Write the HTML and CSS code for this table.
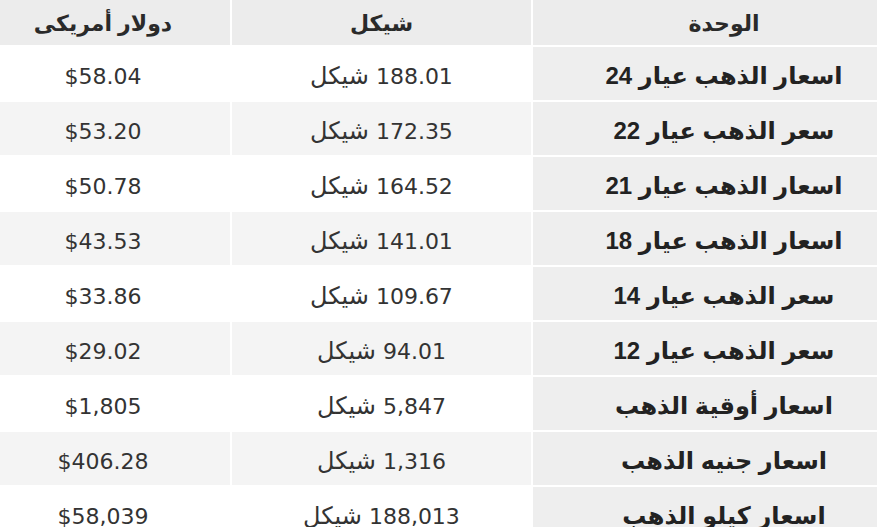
FILE: index.html
```html
<!DOCTYPE html>
<html lang="ar" dir="rtl">
<head>
<meta charset="utf-8">
<link rel="stylesheet" href="styles.css">
</head>
<body>
<table class="prices">
  <thead>
    <tr>
      <th class="c-label">الوحدة</th>
      <th class="c-ils">شيكل</th>
      <th class="c-usd">دولار أمريكى</th>
    </tr>
  </thead>
  <tbody>
    <tr><td class="label">اسعار الذهب عيار 24</td><td>188.01 <span class="unit">شيكل</span></td><td>$58.04</td></tr>
    <tr><td class="label">سعر الذهب عيار 22</td><td>172.35 <span class="unit">شيكل</span></td><td>$53.20</td></tr>
    <tr><td class="label">اسعار الذهب عيار 21</td><td>164.52 <span class="unit">شيكل</span></td><td>$50.78</td></tr>
    <tr><td class="label">اسعار الذهب عيار 18</td><td>141.01 <span class="unit">شيكل</span></td><td>$43.53</td></tr>
    <tr><td class="label">سعر الذهب عيار 14</td><td>109.67 <span class="unit">شيكل</span></td><td>$33.86</td></tr>
    <tr><td class="label">سعر الذهب عيار 12</td><td>94.01 <span class="unit">شيكل</span></td><td>$29.02</td></tr>
    <tr><td class="label">اسعار أوقية الذهب</td><td>5,847 <span class="unit">شيكل</span></td><td>$1,805</td></tr>
    <tr><td class="label">اسعار جنيه الذهب</td><td>1,316 <span class="unit">شيكل</span></td><td>$406.28</td></tr>
    <tr><td class="label">اسعار كيلو الذهب</td><td>188,013 <span class="unit">شيكل</span></td><td>$58,039</td></tr>
  </tbody>
</table>
</body>
</html>
```
FILE: styles.css
```css
html, body {
  margin: 0;
  padding: 0;
  background: #ffffff;
  overflow: hidden;
}
body {
  width: 877px;
  height: 527px;
}
.prices {
  direction: rtl;
  border-collapse: separate;
  border-spacing: 2px;
  margin-top: -2px;
  margin-right: -40px;
  width: 943px;
  table-layout: fixed;
  font-family: "DejaVu Sans", Verdana, sans-serif;
  color: #333333;
}
.c-label { width: 382px; }
.c-ils { width: 299px; }
.c-usd { width: 254px; }
.prices th {
  background: #ececec;
  height: 43px;
  padding: 2px 0 0;
  font-family: "Liberation Sans", "DejaVu Sans", sans-serif;
  font-weight: bold;
  font-size: 22px;
  color: #2a2a2a;
  text-align: center;
  vertical-align: middle;
}
.prices td {
  height: 53px;
  padding: 5px 0 0;
  box-sizing: border-box;
  font-size: 22px;
  text-align: center;
  vertical-align: middle;
  background: #ffffff;
}
.unit {
  font-size: 24px;
}
.prices tbody tr:nth-child(even) td {
  background: #f4f4f4;
}
.prices td.label,
.prices tbody tr:nth-child(even) td.label {
  background: #eeeeee;
  font-family: "Liberation Sans", "DejaVu Sans", sans-serif;
  font-weight: bold;
  font-size: 24px;
  color: #222222;
}
```
